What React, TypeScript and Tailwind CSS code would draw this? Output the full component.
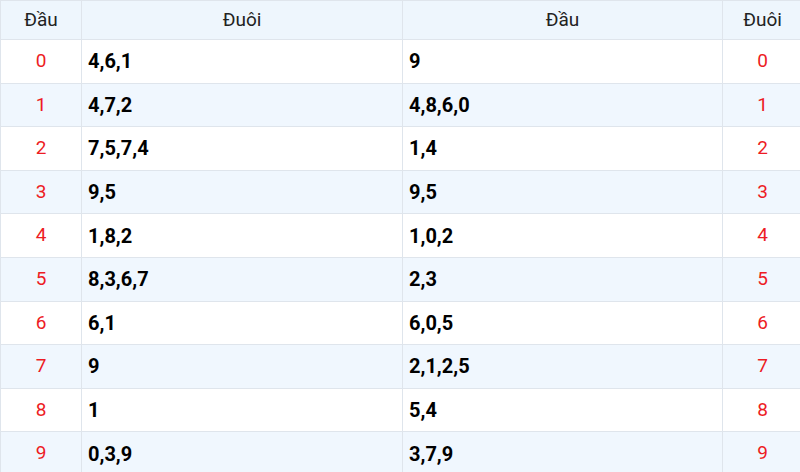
const rows = [
  { d: '0', a: '4,6,1', b: '9' },
  { d: '1', a: '4,7,2', b: '4,8,6,0' },
  { d: '2', a: '7,5,7,4', b: '1,4' },
  { d: '3', a: '9,5', b: '9,5' },
  { d: '4', a: '1,8,2', b: '1,0,2' },
  { d: '5', a: '8,3,6,7', b: '2,3' },
  { d: '6', a: '6,1', b: '6,0,5' },
  { d: '7', a: '9', b: '2,1,2,5' },
  { d: '8', a: '1', b: '5,4' },
  { d: '9', a: '0,3,9', b: '3,7,9' },
];

export default function App() {
  return (
    <div className='h-[472px] w-[800px] overflow-hidden bg-white' style={{ fontFamily: 'Roboto, "Noto Sans", sans-serif' }}>
      <table className='w-[802px] table-fixed border-collapse'>
        <colgroup>
          <col className='w-[81px]' />
          <col className='w-[321px]' />
          <col className='w-[320px]' />
          <col className='w-[80px]' />
        </colgroup>
        <thead>
          <tr className='h-[39px] bg-[#eef6fd] text-[19px] text-[#222]'>
            <th className='border border-[#dfe5ec] font-normal'>Đầu</th>
            <th className='border border-[#dfe5ec] font-normal'>Đuôi</th>
            <th className='border border-[#dfe5ec] font-normal'>Đầu</th>
            <th className='border border-[#dfe5ec] font-normal'>Đuôi</th>
          </tr>
        </thead>
        <tbody>
          {rows.map((r, i) => (
            <tr key={r.d} className={i % 2 === 1 ? 'h-[43.6px] bg-[#f0f7fe]' : 'h-[43.6px] bg-white'}>
              <td className='border border-[#dfe5ec] text-center text-[19px] text-[#ed1c24]'>{r.d}</td>
              <td className='border border-[#dfe5ec] px-[6px] text-[20px] font-bold text-black'>{r.a}</td>
              <td className='border border-[#dfe5ec] px-[6px] text-[20px] font-bold text-black'>{r.b}</td>
              <td className='border border-[#dfe5ec] text-center text-[19px] text-[#ed1c24]'>{r.d}</td>
            </tr>
          ))}
        </tbody>
      </table>
    </div>
  );
}
